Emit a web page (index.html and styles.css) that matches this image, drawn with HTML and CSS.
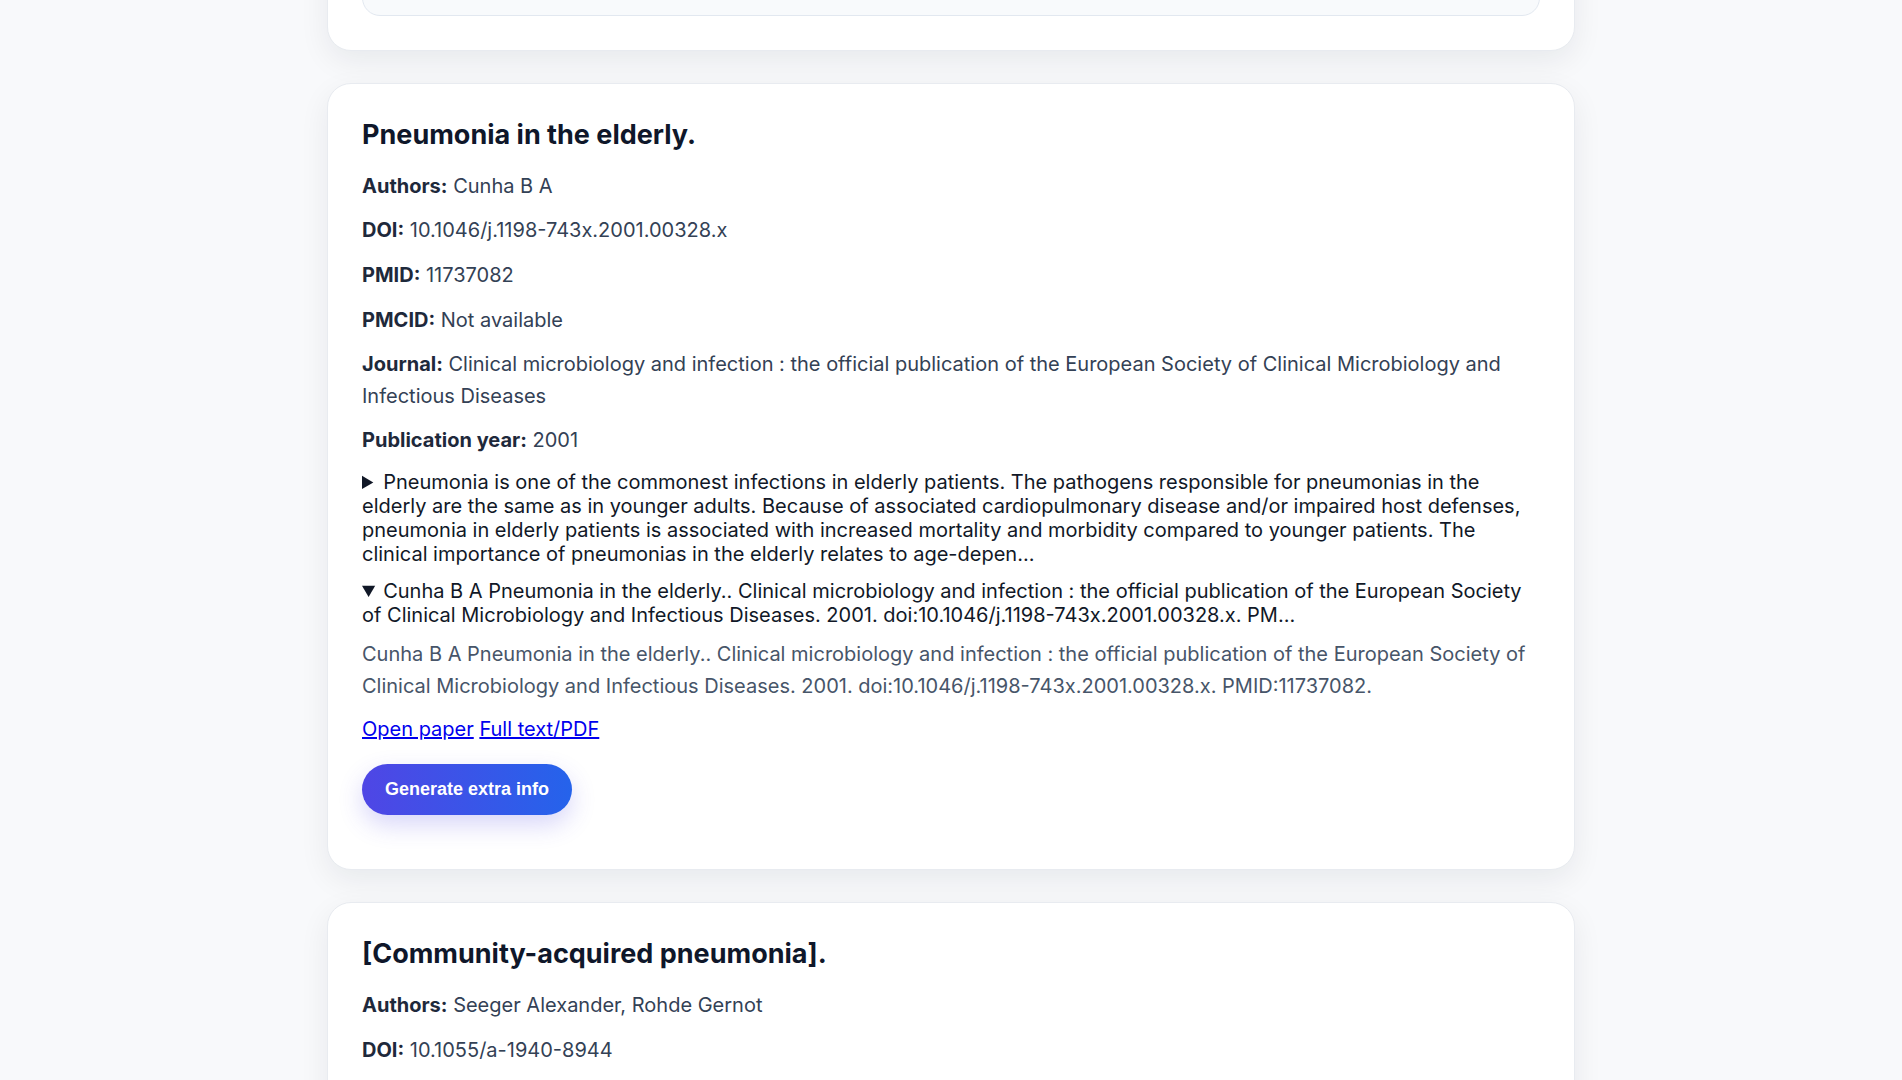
FILE: index.html
```html
<!DOCTYPE html>
<html lang="en">
<head>
  <meta charset="UTF-8">
  <meta name="viewport" content="width=device-width, initial-scale=1">
  <title>Paper results</title>
  <link rel="stylesheet" href="styles.css">
</head>
<body>

  <div class="results">

    <!-- previous result, scrolled mostly out of view -->
    <div class="paper-card">
      <div class="extra-box"></div>
    </div>

    <div class="paper-card">
      <h2>Pneumonia in the elderly.</h2>
      <p class="field"><strong>Authors:</strong> Cunha B A</p>
      <p class="field"><strong>DOI:</strong> 10.1046/j.1198-743x.2001.00328.x</p>
      <p class="field"><strong>PMID:</strong> 11737082</p>
      <p class="field"><strong>PMCID:</strong> Not available</p>
      <p class="field"><strong>Journal:</strong> Clinical microbiology and infection : the official publication of the European Society of Clinical Microbiology and Infectious Diseases</p>
      <p class="field"><strong>Publication year:</strong> 2001</p>

      <details class="abstract">
        <summary>Pneumonia is one of the commonest infections in elderly patients. The pathogens responsible for pneumonias in the elderly are the same as in younger adults. Because of associated cardiopulmonary disease and/or impaired host defenses, pneumonia in elderly patients is associated with increased mortality and morbidity compared to younger patients. The clinical importance of pneumonias in the elderly relates to age-depen...</summary>
      </details>

      <details class="citation" open>
        <summary>Cunha B A Pneumonia in the elderly.. Clinical microbiology and infection : the official publication of the European Society of Clinical Microbiology and Infectious Diseases. 2001. doi:10.1046/j.1198-743x.2001.00328.x. PM...</summary>
        <p class="cite-text">Cunha B A Pneumonia in the elderly.. Clinical microbiology and infection : the official publication of the European Society of Clinical Microbiology and Infectious Diseases. 2001. doi:10.1046/j.1198-743x.2001.00328.x. PMID:11737082.</p>
      </details>

      <p class="links">
        <a href="#">Open paper</a>
        <a href="#">Full text/PDF</a>
      </p>

      <button class="extra-button">Generate extra info</button>
    </div>

    <div class="paper-card">
      <h2>[Community-acquired pneumonia].</h2>
      <p class="field"><strong>Authors:</strong> Seeger Alexander, Rohde Gernot</p>
      <p class="field"><strong>DOI:</strong> 10.1055/a-1940-8944</p>
      <p class="field"><strong>PMID:</strong> 36307071</p>
      <p class="field"><strong>PMCID:</strong> Not available</p>
    </div>

  </div>

</body>
</html>
```

FILE: styles.css
```css
body {
  margin: 0;
  font-family: 'Inter', 'Noto Sans', sans-serif;
  background-color: #f8f9fb;
  color: #111827;
  overflow: hidden;
}

.results {
  max-width: 1248px;
  margin: -100px auto 0;
  display: flex;
  flex-direction: column;
  gap: 32px;
}

.paper-card {
  background-color: #fff;
  border: 1px solid #e8ebf0;
  border-radius: 24px;
  padding: 34px;
  box-shadow: 0 10px 30px rgba(15, 23, 42, 0.07);
}

.extra-box {
  height: 79px;
  background-color: #f8fafc;
  border: 1px solid #e2e8f0;
  border-radius: 18px;
}

h2 {
  font-size: 27px;
  line-height: 1.25;
  font-weight: 700;
  color: #0f172a;
  margin: 0 0 19px;
}

.field {
  font-size: 20px;
  line-height: 1.58;
  color: #334155;
  margin: 13px 0;
}

.field strong {
  color: #1e293b;
}

details {
  font-size: 20px;
  margin: 10px 0 12px;
}

summary {
  line-height: 1.21;
  color: #111827;
  cursor: pointer;
}

.cite-text {
  font-size: 20px;
  line-height: 1.58;
  color: #475569;
  margin: 12px 0;
}

.links {
  font-size: 20px;
  line-height: 1.5;
  margin: 6px 0 20px;
}

.links a {
  color: #0000ee;
}

.extra-button {
  font-family: 'Liberation Sans', Arial, sans-serif;
  font-size: 18px;
  font-weight: 700;
  color: #fff;
  background: linear-gradient(90deg, #4f46e5, #2563eb);
  border: none;
  border-radius: 999px;
  padding: 15px 23px;
  margin-bottom: 20px;
  box-shadow: 0 10px 24px rgba(79, 70, 229, 0.22);
  cursor: pointer;
}
```
